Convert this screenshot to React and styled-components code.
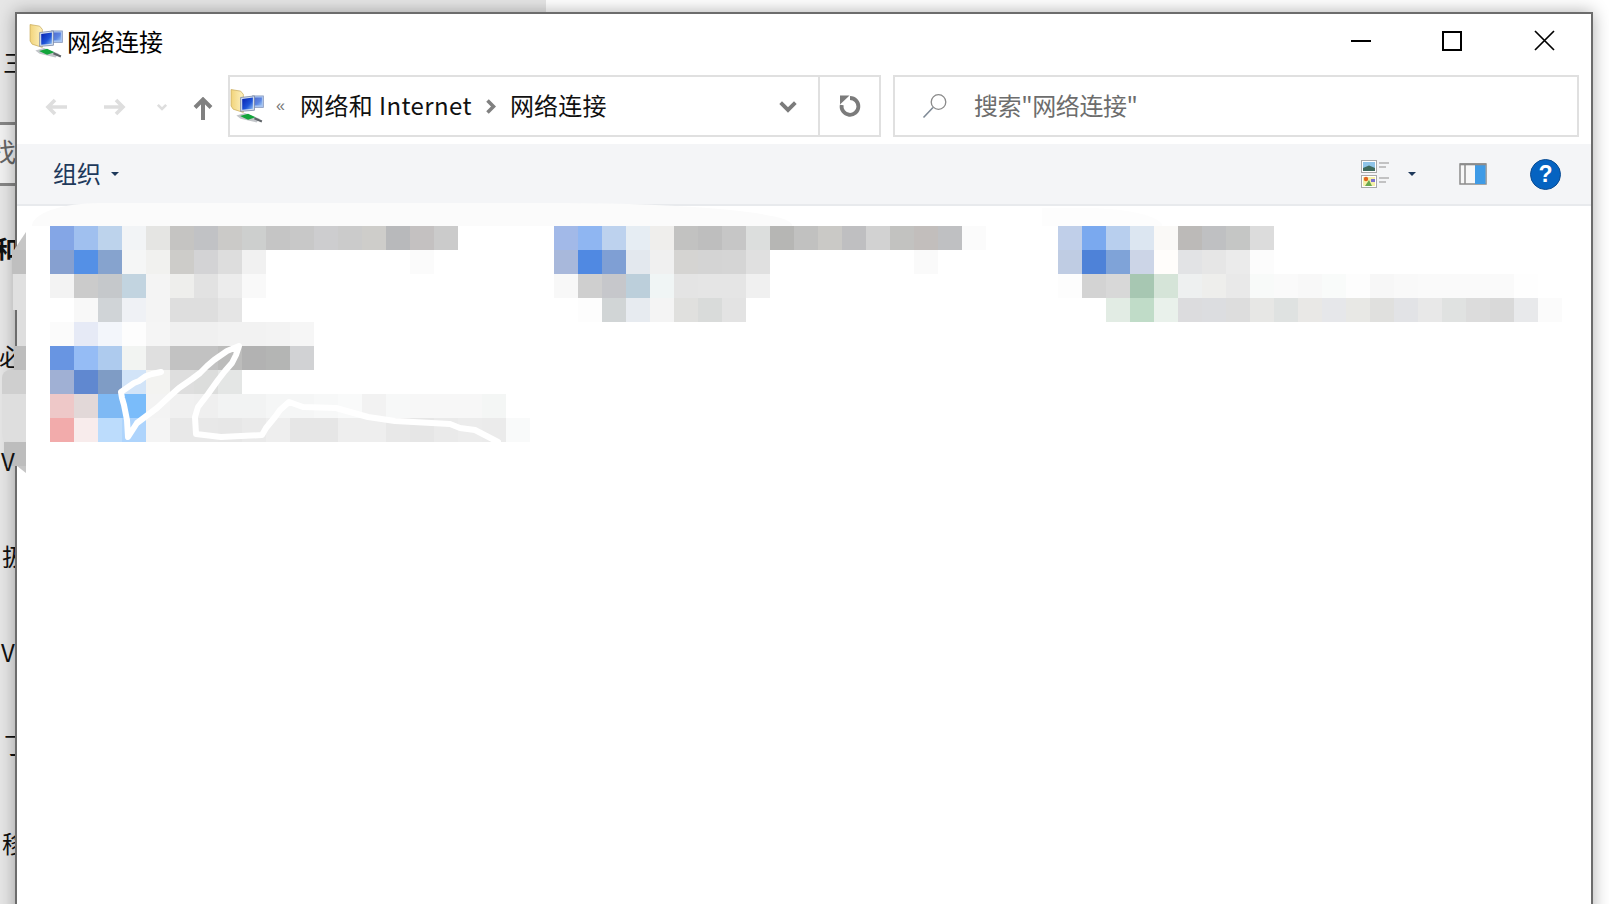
import React from "react";
import styled, { createGlobalStyle } from "styled-components";

const Global = createGlobalStyle`
  html, body { margin: 0; padding: 0; background: #fff; overflow: hidden; }
  * { box-sizing: border-box; }
`;

const FONT = `"Noto Sans CJK SC", "Noto Sans", sans-serif`;

const Desktop = styled.div`
  position: relative;
  width: 1609px;
  height: 904px;
  overflow: hidden;
  background: #fff;
  font-family: ${FONT};
`;
const BehindPanel = styled.div`
  position: absolute;
  left: 0;
  top: 0;
  width: 546px;
  height: 904px;
  background: #e6e6e6;
`;
const BehindField = styled.div`
  position: absolute;
  left: 0;
  top: 122px;
  width: 20px;
  height: 64px;
  background: #f1f1f1;
  border-top: 3px solid #868686;
  border-bottom: 3px solid #868686;
`;
const BehindText = styled.span`
  position: absolute;
  left: ${(p) => p.$x}px;
  top: ${(p) => p.$y}px;
  font-size: ${(p) => p.$s || 24}px;
  line-height: 32px;
  font-weight: ${(p) => (p.$bold ? 700 : 400)};
  color: ${(p) => p.$c || "#111"};
  white-space: nowrap;
`;
const Win = styled.div`
  position: absolute;
  left: 15px;
  top: 12px;
  width: 1578px;
  height: 920px;
  background: #fff;
  border: 2px solid #6c6c6c;
  box-shadow: 0 0 16px rgba(0, 0, 0, 0.32);
  display: flex;
  flex-direction: column;
`;
const TitleBar = styled.div`
  height: 55px;
  flex: none;
  display: flex;
  align-items: center;
  padding: 0 0 2px 12px;
`;
const TitleText = styled.span`
  margin-left: 4px;
  font-size: 24px;
  line-height: 32px;
  color: #000;
`;
const Caption = styled.div`
  margin-left: auto;
  padding-right: 1px;
  display: flex;
`;
const CaptionBtn = styled.div`
  width: ${(p) => p.$w || 92}px;
  height: 53px;
  display: flex;
  align-items: center;
  justify-content: center;
`;
const NavRow = styled.div`
  height: 75px;
  flex: none;
  display: flex;
  align-items: flex-start;
  padding-top: 6px;
  padding-right: 12px;
`;
const NavBtn = styled.div`
  width: ${(p) => p.$w}px;
  height: 62px;
  flex: none;
  padding-top: ${(p) => p.$pt || 0}px;
  display: flex;
  align-items: center;
  justify-content: center;
`;
const AddressBox = styled.div`
  margin-left: 13px;
  width: 653px;
  height: 62px;
  flex: none;
  border: 2px solid #e0e0e0;
  display: flex;
  align-items: center;
`;
const Crumbs = styled.span`
  font-size: 24px;
  line-height: 32px;
  padding-bottom: 2px;
  color: #111;
  white-space: nowrap;
  letter-spacing: ${(p) => p.$ls || "0"};
`;
const Overflow = styled.span`
  width: 36px;
  padding-right: 3px;
  text-align: center;
  font-size: 16px;
  color: #777;
  font-family: "Liberation Sans", sans-serif;
`;
const CrumbSep = styled.div`
  width: 38px;
  display: flex;
  justify-content: center;
`;
const DropCell = styled.div`
  margin-left: auto;
  width: 39px;
  margin-right: 11px;
  display: flex;
  justify-content: center;
`;
const RefreshCell = styled.div`
  width: 61px;
  height: 100%;
  flex: none;
  border-left: 2px solid #e0e0e0;
  display: flex;
  align-items: center;
  justify-content: center;
`;
const SearchBox = styled.div`
  margin-left: 12px;
  flex: 1;
  height: 62px;
  border: 2px solid #e0e0e0;
  display: flex;
  align-items: center;
  padding-left: 27px;
`;
const SearchText = styled.span`
  margin-left: 26px;
  padding-bottom: 2px;
  font-size: 24px;
  line-height: 32px;
  letter-spacing: -0.4px;
  color: #6d6d6d;
`;
const Toolbar = styled.div`
  height: 62px;
  flex: none;
  background: #f4f5f7;
  border-bottom: 2px solid #e8eaed;
  display: flex;
  align-items: center;
  padding: 0 30px 0 36px;
`;
const ToolLabel = styled.span`
  padding-bottom: 2px;
  font-size: 24px;
  line-height: 32px;
  color: #1e395b;
`;
const ToolRight = styled.div`
  margin-left: auto;
  display: flex;
  align-items: center;
`;
const Caret = styled.span`
  width: 0;
  height: 0;
  margin-left: ${(p) => p.$ml}px;
  border-left: 4px solid transparent;
  border-right: 4px solid transparent;
  border-top: 4px solid #1e395b;
`;
const PaneBtn = styled.div`
  margin-left: 43px;
  display: flex;
`;
const Help = styled.div`
  margin-left: 43px;
  width: 31px;
  height: 31px;
  border-radius: 50%;
  background: #0563c1;
  border: 1px solid #0b4c92;
  color: #fff;
  font: 700 23px/29px "Liberation Sans", sans-serif;
  text-align: center;
`;
const Content = styled.div`
  flex: 1;
  display: grid;
  grid-template-columns: repeat(3, 504px);
  align-items: start;
  padding: 20px 0 0 33px;
`;
const Block = styled.div`
  position: relative;
  display: flex;
  flex-direction: column;
`;
const MosaicRow = styled.div`
  display: flex;
  height: 24px;
`;
const Cell = styled.div`
  width: 24px;
  height: 24px;
  flex: none;
  background: #${(p) => p.$c};
`;
const Scribble = styled.svg`
  position: absolute;
  left: 0;
  top: 0;
  width: 504px;
  height: 216px;
  overflow: hidden;
`;
const FaintSmear = styled.div`
  position: absolute;
  left: ${(p) => p.$x}px;
  top: ${(p) => p.$y}px;
  width: ${(p) => p.$w}px;
  height: ${(p) => p.$h}px;
  background: ${(p) => p.$c};
  border-radius: ${(p) => p.$r};
`;
const EdgeSmear = styled.div`
  position: absolute;
  right: calc(1609px - 26px);
  top: 232px;
  display: flex;
  flex-direction: column;
  align-items: flex-end;
`;
const EdgePatch = styled.div`
  width: ${(p) => p.$w}px;
  height: ${(p) => p.$h}px;
  background: ${(p) => p.$c};
  border-radius: ${(p) => p.$r || "0"};
  clip-path: ${(p) => p.$clip || "none"};
`;

const b1 = [
  "84a6e6 a0c0ef bdd3ec f2f4f6 e5e5e3 c5c4c2 c1c2c5 cbcac8 cdcfce c5c5c5 c8c8c8 cdcdcf cbcbcb cecdca b8b9bb c4c1c1 cbcbcb",
  "86a0d0 5490e6 86a3ce f5f6f6 f1f1ef cdccc9 d3d3d5 dddddd f1f1f1 ffffff ffffff ffffff ffffff ffffff ffffff fbfbfb",
  "f3f3f3 cbcbcb c5c8cb c2d4e0 f4f4f4 eeeeec e2e2e2 ececec f9f9f9",
  "ffffff f8f8f8 d0d4d7 eff1f5 f4f4f4 dedede dedede e5e5e5",
  "fbfbfb e6eaf6 f3f6fb fdfdfd f5f5f5 f0f0f0 f0f0f0 f2f2f2 f2f2f2 f3f3f3 f6f6f6",
  "6895e2 95bcf5 aecbee f2f4f2 dfdfdf c2c2c2 c2c2c2 bcbcbb b2b2b2 b4b5b4 d1d2d4",
  "a0b0d4 6088d0 7f9cc5 d2e4f8 f3f3f1 dedede dcdddc e4e6e5",
  "eec8c8 e2d8d8 7eb9f4 7abcfa f3f3f3 f0f0f0 efefef f2f3f3 f2f3f3 f5f6f6 f5f6f6 f7f8f8 f9fafa f2f2f2 f7f8f8 f7f7f7 f7f7f7 f7f7f7 f4f6f5",
  "f2abab f8ecec bcdcfc aed4fc f4f4f4 e8e8e8 e8e8e8 e7e7e7 eaeaea eeeeee e6e6e6 e6e6e6 eeeeee eeeeee e8e8e8 e6e6e6 eaeaea ececec ebebeb f9fafa",
];
const b2 = [
  "a2b9e8 8fb6f2 bdd2ee e6edf3 efeeec c2c2c1 bebebe c6c6c6 dcdedd b6b6b4 c1c1c0 cac9c6 bfbfc1 d2d2d2 c2c2c0 c2bebc bfc0c2 fbfbfb",
  "a8b8db 5089e2 7f9fd4 e3e8ee f0f0f0 d5d4d2 d4d4d4 d5d5d5 e0e0e0 ffffff ffffff ffffff ffffff ffffff ffffff fafafa",
  "f8f8f8 cfcfcf c6c7cb bccfdb f0f5f5 e4e4e4 e5e5e5 e5e5e5 f0f0f0",
  "ffffff fdfdfd d1d5d6 e7ebf0 f4f4f4 e0e0de d9dbda e3e3e3",
];
const b3 = [
  "c0cfe9 7aa9ef b8cfee dce6f1 faf9f7 bcbab8 bfc0c2 c5c6c5 dcdcdc",
  "bfcce3 4e82d8 7fa3d8 ccd5e7 fffdfb e2e3e5 e6e6e6 ebebeb fcfcfc",
  "fdfdfd d3d3d3 d8d8d8 a7c7b2 d5e4d8 eef0f0 eeeeec e9e9e9 f8faf9 fafafa f8f8f8 f9fbfa fdfdfd f7f7f7 f9f9f9 fafafa fafafa fafafa fafafa fefefe",
  "ffffff ffffff e2ece4 c0dcc8 e9f1eb dcdcde dcdde0 dddddd e7e7e5 dfe2e1 e9e8e6 e6e7ea e8e8e5 e0e0de e2e3e6 e8e8e8 e0e2e1 dcdcdc d9d9d9 e8e9eb fbfbfb",
];

const Mosaic = ({ rows }) =>
  rows.map((r, i) => (
    <MosaicRow key={i}>
      {r.split(" ").map((c, j) => (
        <Cell key={j} $c={c} />
      ))}
    </MosaicRow>
  ));

const NetworkIcon = () => (
  <svg width="34" height="34" viewBox="0 0 32 32">
    <defs>
      <linearGradient id="fold" x1="0" x2="1" y1="0" y2="0">
        <stop offset="0" stopColor="#f2d47a" />
        <stop offset="1" stopColor="#fdf1c0" />
      </linearGradient>
      <linearGradient id="scr" x1="0" x2="1" y1="0" y2="1">
        <stop offset="0" stopColor="#0620b0" />
        <stop offset="0.6" stopColor="#1f55d8" />
        <stop offset="1" stopColor="#8fc0f0" />
      </linearGradient>
    </defs>
    <path d="M1 0.5 L10 2 L12.5 5 L12.5 22 L3 19 L1 16 Z" fill="url(#fold)" stroke="#c9ab5c" strokeWidth="0.7" />
    <rect x="21" y="6.5" width="10.5" height="11" fill="#a8c4f0" stroke="#8899bb" strokeWidth="0.7" />
    <rect x="22.5" y="8" width="7.5" height="7.5" fill="url(#scr)" opacity="0.55" />
    <path d="M10 8 L23 6.5 L23 20 L10 21 Z" fill="#d4dfef" stroke="#6e7fa0" strokeWidth="0.7" />
    <path d="M11.5 9.5 L21.5 8 L21.5 18.5 L11.5 19.5 Z" fill="url(#scr)" />
    <path d="M6 25 L14 22.5 L28 28 L25 31.5 L10 28 Z" fill="#c2c5c9" />
    <path d="M9.5 25.5 L17 23.2 L24 26.5 L17 29 Z" fill="#12a53b" />
    <path d="M23 27.5 L30 30.5" stroke="#5f6469" strokeWidth="2" />
  </svg>
);
const Minimize = () => (
  <svg width="20" height="2" viewBox="0 0 20 2"><rect width="20" height="2" fill="#000" /></svg>
);
const Maximize = () => (
  <svg width="20" height="20" viewBox="0 0 20 20"><rect x="1" y="1" width="18" height="18" fill="none" stroke="#000" strokeWidth="2" /></svg>
);
const Close = () => (
  <svg width="21" height="21" viewBox="0 0 21 21"><path d="M1 1 L20 20 M20 1 L1 20" stroke="#000" strokeWidth="1.7" /></svg>
);
const ArrowLeft = ({ c }) => (
  <svg width="23" height="18" viewBox="0 0 23 18">
    <path d="M10 2 L3 9 L10 16 M3 9 L22 9" fill="none" stroke={c} strokeWidth="3.6" />
  </svg>
);
const ArrowRight = ({ c }) => (
  <svg width="23" height="18" viewBox="0 0 23 18">
    <path d="M13 2 L20 9 L13 16 M20 9 L1 9" fill="none" stroke={c} strokeWidth="3.6" />
  </svg>
);
const ChevronDown = ({ c, w, h, sw }) => (
  <svg width={w} height={h} viewBox={`0 0 ${w} ${h}`}>
    <path d={`M${sw * 0.7} ${sw * 0.7} L${w / 2} ${h - sw * 0.8} L${w - sw * 0.7} ${sw * 0.7}`} fill="none" stroke={c} strokeWidth={sw} />
  </svg>
);
const ArrowUp = () => (
  <svg width="20" height="23" viewBox="0 0 20 23">
    <path d="M2 10.5 L10 2.5 L18 10.5 M10 3 L10 23" fill="none" stroke="#808080" strokeWidth="4" />
  </svg>
);
const ChevronRight = () => (
  <svg width="11" height="15" viewBox="0 0 11 15">
    <path d="M2.5 1.5 L8.5 7.5 L2.5 13.5" fill="none" stroke="#808080" strokeWidth="3.6" />
  </svg>
);
const Refresh = () => (
  <svg width="24" height="24" viewBox="0 0 24 24">
    <path d="M12 4 A8.4 8.4 0 1 1 3.7 11" fill="none" stroke="#7b7b7b" strokeWidth="3.8" />
    <path d="M2 1.5 L2 10.5 L11.5 1.5 Z" fill="#7b7b7b" />
  </svg>
);
const SearchIcon = () => (
  <svg width="26" height="26" viewBox="0 0 26 26">
    <circle cx="16.5" cy="9" r="7.3" fill="none" stroke="#8a8a8a" strokeWidth="1.3" />
    <path d="M11 14.5 L1.5 24.5" stroke="#7f8a96" strokeWidth="1.6" />
  </svg>
);
const ViewIcon = () => (
  <svg width="29" height="29" viewBox="0 0 29 29">
    <rect x="0.5" y="0.5" width="15" height="12" fill="#fff" stroke="#a8a8a8" />
    <rect x="2" y="2" width="12" height="9" fill="#8ec4e8" />
    <path d="M2 8 L8 5.5 L14 8 L14 11 L2 11 Z" fill="#3e6a5c" />
    <rect x="0.5" y="15.5" width="15" height="12" fill="#fff" stroke="#a8a8a8" />
    <rect x="2" y="17" width="12" height="9" fill="#f5f0a8" />
    <circle cx="5" cy="19" r="2.2" fill="#e0641e" />
    <path d="M4 26 L8 20 L11 26 Z" fill="#6aa84f" />
    <rect x="10" y="19" width="4" height="3" fill="#7a6fd0" />
    <path d="M18 3 H28 M18 7 H25 M18 18 H28 M18 22 H25" stroke="#8f8f8f" strokeWidth="1.2" />
  </svg>
);
const PaneIcon = () => (
  <svg width="28" height="22" viewBox="0 0 28 22">
    <rect x="1" y="1" width="26" height="20" fill="#f8f8f8" stroke="#8c8c8c" strokeWidth="1.5" />
    <rect x="16" y="2" width="10.5" height="19" fill="#3f9be6" />
    <path d="M6 1 V21" stroke="#8c8c8c" strokeWidth="1.5" />
    <rect x="1" y="0.3" width="26" height="2" fill="#8c8c8c" />
  </svg>
);

const scribble =
  "M161 372 L152 374 L146 376 L139 381 L134 383 L121 392 L122 398 L124 405 L127 420 L128 437 L137 423 L157 408 L170 396 L179 388 L192 379 L200 373 L207 366 L214 360 L227 351 L239 346 L236 355 L232 363 L225 371 L218 380 L208 394 L198 407 L195 417 L196 434 L221 437 L262 435 L266 428 L275 417 L280 410 L289 402 L303 407 L336 408 L368 417 L395 421 L450 424 L460 428 L475 430 L498 442";

export default function App() {
  return (
    <Desktop>
      <Global />
      <BehindPanel />
      <BehindField>
        <BehindText $x={-10} $y={10} $s={26} $c="#666">找</BehindText>
      </BehindField>
      <BehindText $x={3} $y={46}>三</BehindText>
      <BehindText $x={-5} $y={232} $bold>和</BehindText>
      <BehindText $x={-1} $y={340}>必</BehindText>
      <BehindText $x={2} $y={540}>扱</BehindText>
      <BehindText $x={1} $y={636}>V</BehindText>
      <BehindText $x={4} $y={728}>丁</BehindText>
      <BehindText $x={2} $y={827}>移</BehindText>
      <Win>
        <TitleBar>
          <NetworkIcon />
          <TitleText>网络连接</TitleText>
          <Caption>
            <CaptionBtn $w={91}><Minimize /></CaptionBtn>
            <CaptionBtn><Maximize /></CaptionBtn>
            <CaptionBtn><Close /></CaptionBtn>
          </Caption>
        </TitleBar>
        <NavRow>
          <NavBtn $w={78} $pt={1}><ArrowLeft c="#dedede" /></NavBtn>
          <NavBtn $w={38} $pt={1}><ArrowRight c="#dedede" /></NavBtn>
          <NavBtn $w={58} $pt={1}><ChevronDown c="#dedede" w={12} h={8} sw={2.6} /></NavBtn>
          <NavBtn $w={24} $pt={4}><ArrowUp /></NavBtn>
          <AddressBox>
            <NetworkIcon />
            <Overflow>«</Overflow>
            <Crumbs $ls="0.4px">网络和 Internet</Crumbs>
            <CrumbSep><ChevronRight /></CrumbSep>
            <Crumbs $ls="0.2px">网络连接</Crumbs>
            <DropCell><ChevronDown c="#7b7b7b" w={20} h={13} sw={3.8} /></DropCell>
            <RefreshCell><Refresh /></RefreshCell>
          </AddressBox>
          <SearchBox>
            <SearchIcon />
            <SearchText>搜索"网络连接"</SearchText>
          </SearchBox>
        </NavRow>
        <Toolbar>
          <ToolLabel>组织</ToolLabel>
          <Caret $ml={10} />
          <ToolRight>
            <ViewIcon />
            <Caret $ml={18} />
            <PaneBtn><PaneIcon /></PaneBtn>
            <Help>?</Help>
          </ToolRight>
        </Toolbar>
        <Content>
          <Block>
            <Mosaic rows={b1} />
            <Scribble viewBox="50 226 504 216">
              <path d={scribble} fill="none" stroke="#fff" strokeWidth="6" strokeLinejoin="round" strokeLinecap="round" />
            </Scribble>
          </Block>
          <Block><Mosaic rows={b2} /></Block>
          <Block><Mosaic rows={b3} /></Block>
        </Content>
        <FaintSmear $x={15} $y={189} $w={760} $h={23} $c="#fbfbfb" $r="70px 240px 0 0 / 24px 23px 0 0" />
        <FaintSmear $x={1025} $y={194} $w={120} $h={18} $c="#fdfdfd" $r="0 80px 0 0 / 0 18px 0 0" />
      </Win>
      <EdgeSmear>
        <EdgePatch $w={12} $h={18} $c="#c6c6c6" $clip="polygon(100% 0, 100% 100%, 0 100%)" />
        <EdgePatch $w={14} $h={24} $c="#bfbfbf" />
        <EdgePatch $w={13} $h={36} $c="#e0e0e0" />
        <EdgePatch $w={9} $h={36} $c="#dedede" />
        <EdgePatch $w={12} $h={24} $c="#bdbdbd" />
        <EdgePatch $w={24} $h={24} $c="#cfcfcf" $r="8px 0 0 0" />
        <EdgePatch $w={24} $h={48} $c="#dedede" $r="0 0 0 8px" />
        <EdgePatch $w={22} $h={24} $c="#bdbdbd" />
        <EdgePatch $w={9} $h={7} $c="#c6c6c6" $clip="polygon(0 0, 100% 0, 100% 100%)" />
      </EdgeSmear>
      <BehindText $x={1} $y={445}>V</BehindText>
    </Desktop>
  );
}
